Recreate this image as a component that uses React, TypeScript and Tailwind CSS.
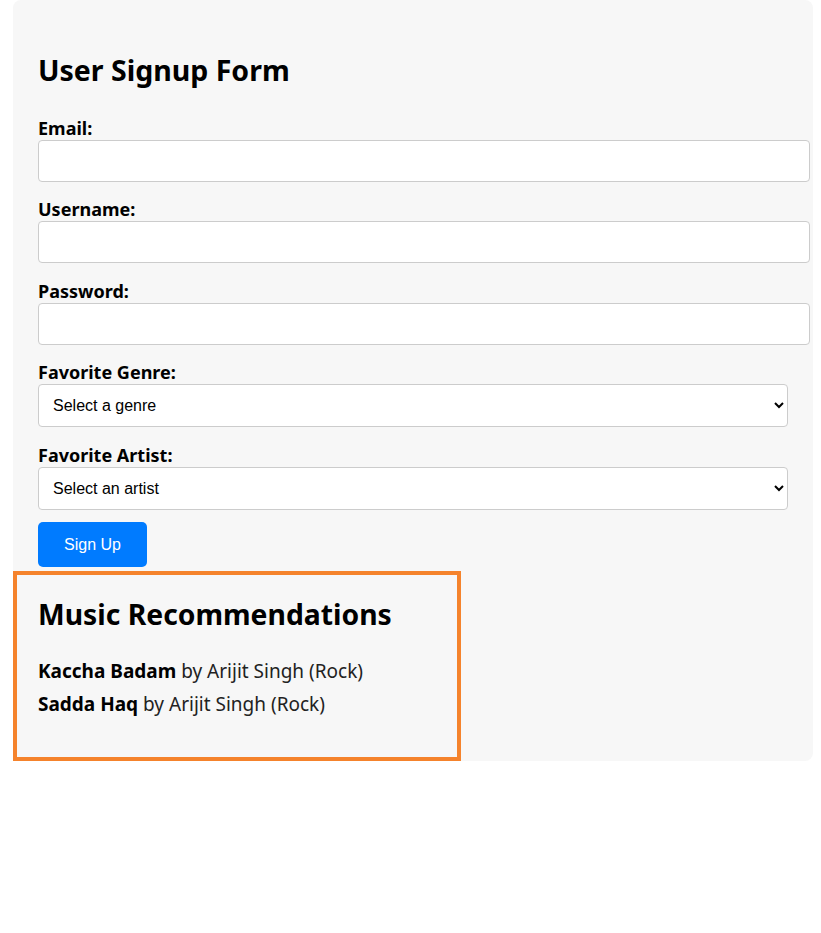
import React from "react";

const font = { fontFamily: '"Noto Sans", "Open Sans", sans-serif' };
const arial = { fontFamily: '"Liberation Sans", Arial, sans-serif' };

// One labelled field of the signup form
const Field: React.FC<{ label: string; type?: string; gap?: string }> = ({ label, type = "text", gap = "mb-[16px]" }) => (
  <div className={gap}>
    <label className="block h-[23px] text-[18px] font-bold leading-[23px] text-black">{label}</label>
    <input
      type={type}
      className="box-content block h-[20px] w-full rounded-[4px] border border-[#cccccc] bg-white px-[10px] py-[10px] text-[16px] outline-none"
    />
  </div>
);

const SelectField: React.FC<{ label: string; placeholder: string; gap: string }> = ({ label, placeholder, gap }) => (
  <div className={gap}>
    <label className="block h-[23px] text-[18px] font-bold leading-[23px] text-black">{label}</label>
    <select
      defaultValue=""
      className="block h-[43px] w-full rounded-[4px] border border-[#cccccc] bg-white px-[10px] text-[16px] text-black"
      style={arial}
    >
      <option value="">{placeholder}</option>
    </select>
  </div>
);

const songs = [
  { title: "Kaccha Badam", artist: "Arijit Singh", genre: "Rock" },
  { title: "Sadda Haq", artist: "Arijit Singh", genre: "Rock" },
];

export default function App() {
  return (
    <div className="min-h-[933px] bg-white" style={font}>
      <div className="ml-[13px] w-[800px] rounded-[8px] bg-[#f7f7f7]">
        <div className="px-[25px] pt-[46px]">
          <h1 className="mb-[23px] text-[28.5px] font-bold leading-[48px] text-black">User Signup Form</h1>
          <Field label="Email:" type="email" />
          <Field label="Username:" />
          <Field label="Password:" type="password" gap="mb-[16px] pt-[1px]" />
          <SelectField label="Favorite Genre:" placeholder="Select a genre" gap="mb-[17px]" />
          <SelectField label="Favorite Artist:" placeholder="Select an artist" gap="mb-[12px]" />
          <button className="block h-[45px] w-[109px] rounded-[5px] bg-[#007bff] text-[16px] text-white" style={arial}>
            Sign Up
          </button>
        </div>
        <div className="mt-[4px] h-[190px] w-[448px] border-4 border-[#f5832c] px-[21px] pt-[19px]">
          <h2 className="mb-[21px] text-[28.3px] font-bold leading-[40px] text-black">Music Recommendations</h2>
          {songs.map((s) => (
            <p key={s.title} className="text-[19px] leading-[33px] text-[#222]">
              <strong className="font-bold text-black">{s.title}</strong> by {s.artist} ({s.genre})
            </p>
          ))}
        </div>
      </div>
    </div>
  );
}
